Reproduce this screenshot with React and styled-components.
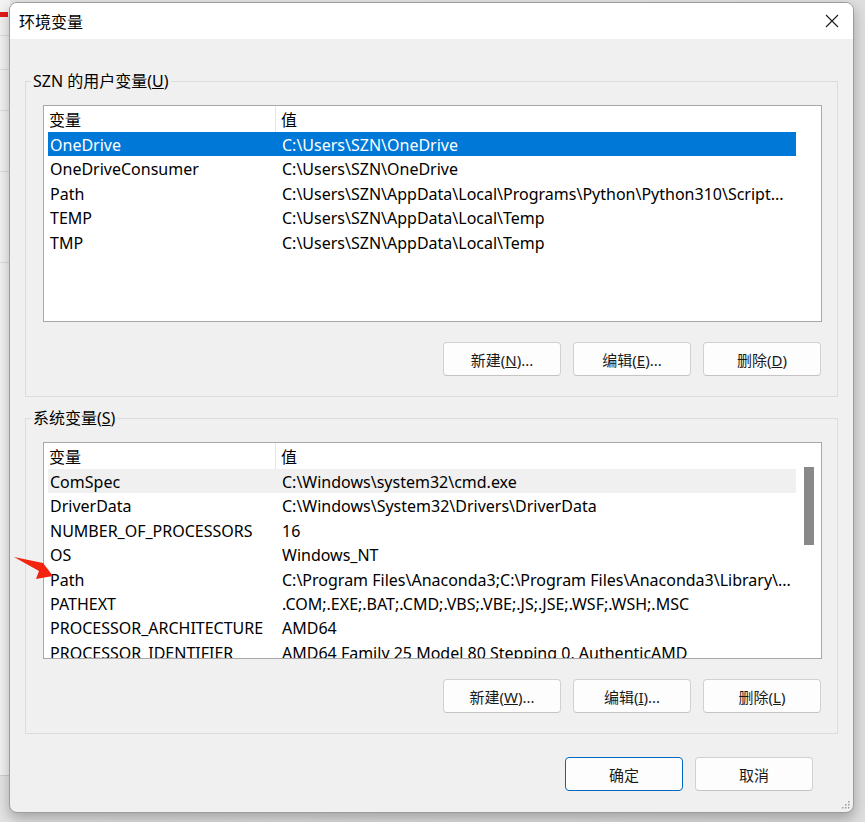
import React from 'react'
import styled, { createGlobalStyle } from 'styled-components'

const GlobalStyle = createGlobalStyle`
  html, body { margin:0; padding:0; }
  body {
    background:#dcdcdc;
    font-family:"Noto Sans","Noto Sans CJK SC",sans-serif;
    color:#000;
  }
  * { box-sizing:border-box; }
`

const userVars = [
  ['OneDrive', 'C:\\Users\\SZN\\OneDrive'],
  ['OneDriveConsumer', 'C:\\Users\\SZN\\OneDrive'],
  ['Path', 'C:\\Users\\SZN\\AppData\\Local\\Programs\\Python\\Python310\\Script...'],
  ['TEMP', 'C:\\Users\\SZN\\AppData\\Local\\Temp'],
  ['TMP', 'C:\\Users\\SZN\\AppData\\Local\\Temp'],
]

const systemVars = [
  ['ComSpec', 'C:\\Windows\\system32\\cmd.exe'],
  ['DriverData', 'C:\\Windows\\System32\\Drivers\\DriverData'],
  ['NUMBER_OF_PROCESSORS', '16'],
  ['OS', 'Windows_NT'],
  ['Path', 'C:\\Program Files\\Anaconda3;C:\\Program Files\\Anaconda3\\Library\\...'],
  ['PATHEXT', '.COM;.EXE;.BAT;.CMD;.VBS;.VBE;.JS;.JSE;.WSF;.WSH;.MSC'],
  ['PROCESSOR_ARCHITECTURE', 'AMD64'],
  ['PROCESSOR_IDENTIFIER', 'AMD64 Family 25 Model 80 Stepping 0, AuthenticAMD'],
]

const Page = styled.div`
  position:relative;
  width:865px;
  height:822px;
  overflow:hidden;
  display:flex;
  align-items:flex-start;
  background:linear-gradient(90deg, #e4e4e4 0%, #dedede 100%);
`

const BackWindow = styled.div`
  flex:none;
  width:10px;
  height:776px;
  background:#f3f3f3;
  border-bottom:1px solid #cfcfcf;
  display:flex;
  flex-direction:column;
  .mark { width:8px; height:5px; background:#e21b1b; margin-top:12px; }
  .line { height:1px; background:#dedede; }
`

const Dialog = styled.div`
  flex:none;
  width:845px;
  height:811px;
  margin-top:2px;
  margin-left:-1px;
  display:flex;
  flex-direction:column;
  background:#f0f0f0;
  border:1px solid #9c9c9c;
  border-radius:8px;
  box-shadow:0 6px 14px rgba(0,0,0,0.28);
  overflow:hidden;
  position:relative;
`

const TitleBar = styled.div`
  height:36px;
  flex:none;
  display:flex;
  align-items:center;
  background:#fff;
  padding-left:9px;
  font-size:16px;
  .title { flex:1; }
`

const CloseButton = styled.div`
  width:42px;
  height:36px;
  display:flex;
  align-items:center;
  justify-content:center;
`

const Body = styled.div`
  flex:1;
  display:flex;
  flex-direction:column;
  padding:31px 15px 0 15px;
`

const Group = styled.fieldset`
  margin:0;
  min-width:0;
  border:1px solid #dcdcdc;
  padding:13px 15px 20px 5px;
  & + & { margin-top:10px; }
  legend {
    padding:0 2px;
    font-size:16px;
    line-height:22px;
  }
`

const GroupInner = styled.div`
  padding-left:12px;
  display:flex;
  flex-direction:column;
`

const ListBox = styled.div`
  width:779px;
  height:217px;
  border:1px solid #a8a8a8;
  background:#fff;
  display:flex;
  overflow:hidden;
  font-size:16px;
`

const Rows = styled.div`
  width:748px;
  margin-left:4px;
  flex:none;
`

const HeaderRow = styled.div`
  display:grid;
  grid-template-columns:228px 1fr;
  height:26px;
  line-height:24px;
  span { padding-top:2px; }
  span:first-child { border-right:1px solid #e5e5e5; padding-left:1px; }
  span:last-child { padding-left:5px; }
`

const Row = styled.div`
  display:grid;
  grid-template-columns:232px 1fr;
  height:24.4px;
  line-height:23px;
  white-space:nowrap;
  background:${p => p.$state === 'active' ? '#0078d7' : p.$state === 'inactive' ? '#f0f0f0' : 'transparent'};
  color:${p => p.$state === 'active' ? '#fff' : '#000'};
  span { padding:2px 0 0 2px; overflow:hidden; }
`

const ScrollTrack = styled.div`
  width:25px;
  flex:none;
  padding:24px 0 0 8px;
  .thumb { width:10px; height:78px; background:#898989; }
`

const ButtonRow = styled.div`
  display:flex;
  justify-content:flex-end;
  gap:12px;
  margin-top:20px;
  padding-right:1px;
`

const Button = styled.button`
  width:118px;
  height:34px;
  border:1px solid ${p => p.$primary ? '#0067c0' : '#d1d1d1'};
  border-bottom-color:${p => p.$primary ? '#0067c0' : '#c4c4c4'};
  border-radius:4px;
  background:#fdfdfd;
  font-family:"Noto Sans","Noto Sans CJK SC",sans-serif;
  font-size:15px;
  color:#1a1a1a;
  padding:0;
`

const Footer = styled.div`
  display:flex;
  justify-content:flex-end;
  gap:12px;
  margin-top:23px;
  padding-right:25px;
`

const Grip = styled.svg`
  position:absolute;
  right:2px;
  bottom:2px;
`

const Arrow = styled.svg`
  position:absolute;
  left:0;
  top:0;
  pointer-events:none;
`

function VarList({ rows, selected, scroll }) {
  return (
    <ListBox>
      <Rows>
        <HeaderRow><span>变量</span><span>值</span></HeaderRow>
        {rows.map(([name, value], i) => (
          <Row key={name + i} $state={i === 0 ? selected : null}>
            <span>{name}</span><span>{value}</span>
          </Row>
        ))}
      </Rows>
      {scroll && <ScrollTrack><div className="thumb" /></ScrollTrack>}
    </ListBox>
  )
}

function App() {
  return (
    <>
      <GlobalStyle />
      <Page>
        <BackWindow>
          <div className="mark" />
          <div className="line" style={{ marginTop: 18 }} />
          <div className="line" style={{ marginTop: 33 }} />
          <div className="line" style={{ marginTop: 40 }} />
          <div className="line" style={{ marginTop: 60 }} />
          <div className="line" style={{ marginTop: 90 }} />
        </BackWindow>
        <Dialog>
          <TitleBar>
            <span className="title">环境变量</span>
            <CloseButton>
              <svg width="14" height="14" viewBox="0 0 14 14">
                <path d="M1 1 L13 13 M13 1 L1 13" stroke="#1a1a1a" strokeWidth="1.1" fill="none" />
              </svg>
            </CloseButton>
          </TitleBar>
          <Body>
            <Group>
              <legend>SZN 的用户变量(<u>U</u>)</legend>
              <GroupInner>
                <VarList rows={userVars} selected="active" />
                <ButtonRow>
                  <Button>新建(<u>N</u>)...</Button>
                  <Button>编辑(<u>E</u>)...</Button>
                  <Button>删除(<u>D</u>)</Button>
                </ButtonRow>
              </GroupInner>
            </Group>
            <Group>
              <legend>系统变量(<u>S</u>)</legend>
              <GroupInner>
                <VarList rows={systemVars} selected="inactive" scroll />
                <ButtonRow>
                  <Button>新建(<u>W</u>)...</Button>
                  <Button>编辑(<u>I</u>)...</Button>
                  <Button>删除(<u>L</u>)</Button>
                </ButtonRow>
              </GroupInner>
            </Group>
            <Footer>
              <Button $primary>确定</Button>
              <Button>取消</Button>
            </Footer>
          </Body>
          <Grip width="10" height="10" viewBox="0 0 10 10">
            {[[8, 2], [8, 5], [5, 5], [8, 8], [5, 8], [2, 8]].map(([x, y]) => (
              <rect key={x + '-' + y} x={x - 1} y={y - 1} width="1.5" height="1.5" fill="#9a9a9a" />
            ))}
          </Grip>
        </Dialog>
        <Arrow width="865" height="822" viewBox="0 0 865 822">
          <polygon points="14,557 43,563 53,576 36,579 39,571" fill="#f2230f" />
        </Arrow>
      </Page>
    </>
  )
}

export default App
